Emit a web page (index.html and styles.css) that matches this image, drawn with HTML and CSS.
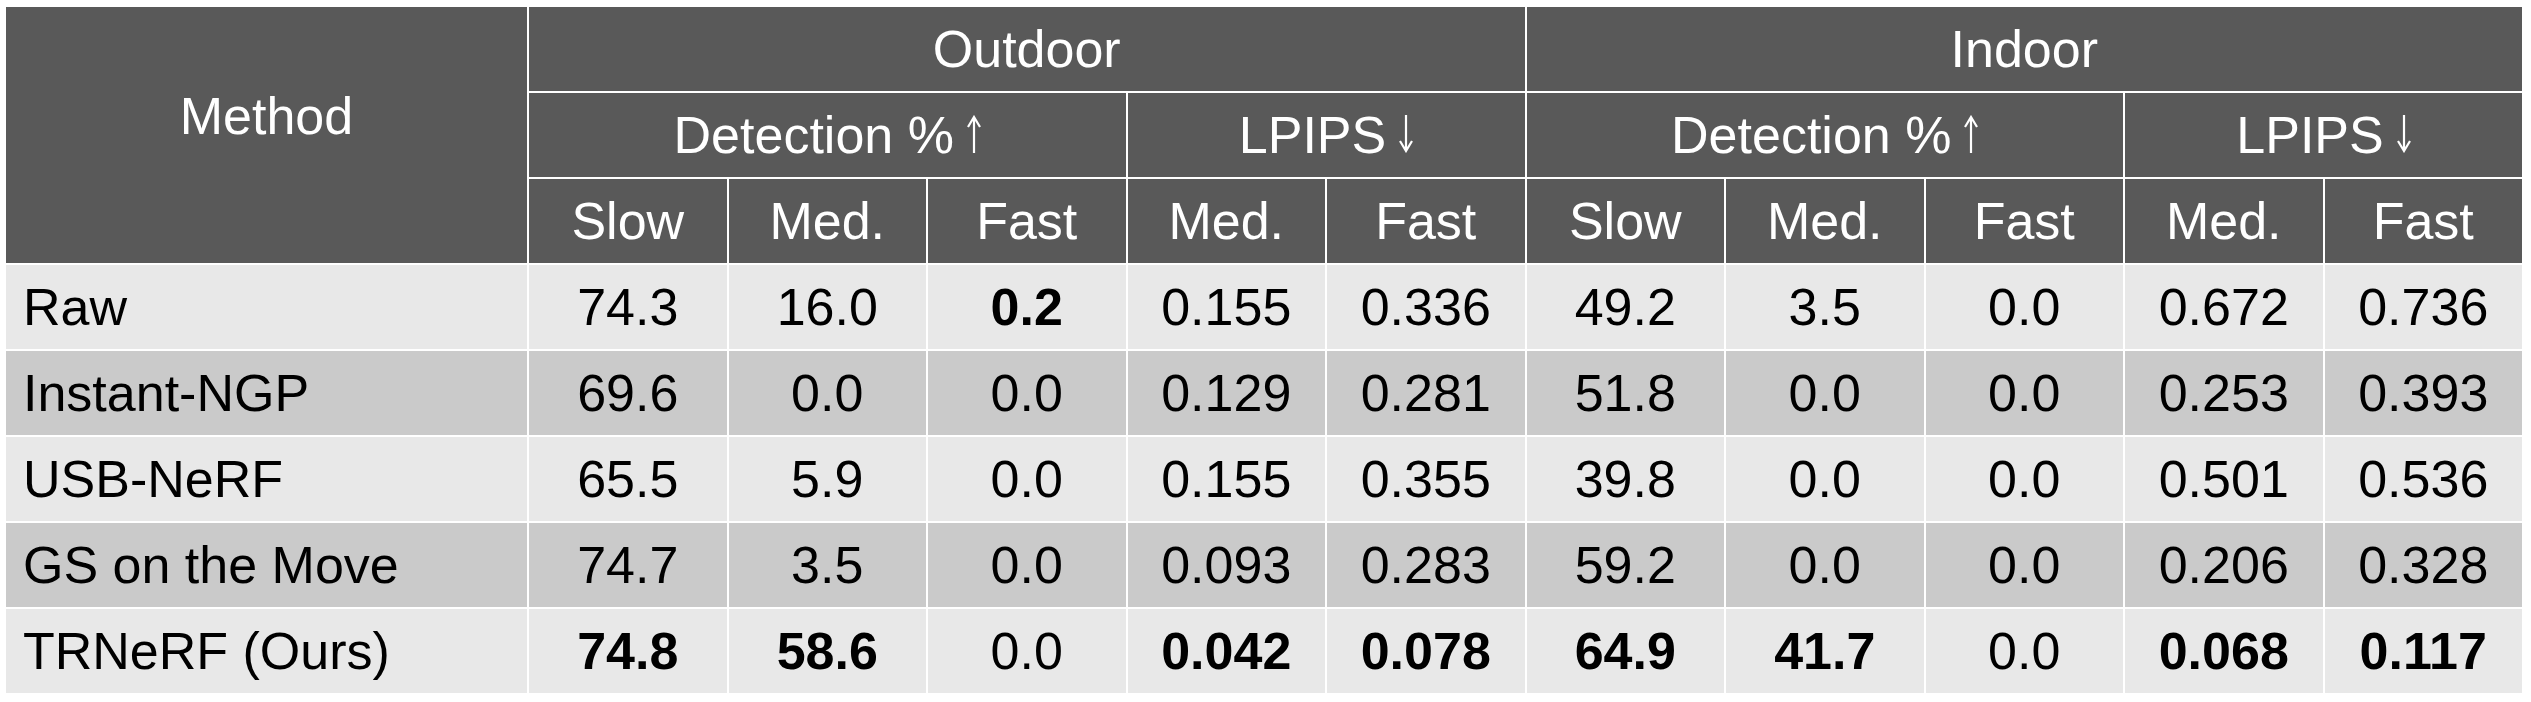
FILE: index.html
```html
<!DOCTYPE html>
<html>
<head>
<meta charset="utf-8">
<link rel="stylesheet" href="styles.css">
</head>
<body>
<div class="wrap">
<table class="results">
  <colgroup>
    <col class="col-method">
    <col span="10">
  </colgroup>
  <thead>
    <tr>
      <th class="method-head" rowspan="3">Method</th>
      <th colspan="5">Outdoor</th>
      <th colspan="5">Indoor</th>
    </tr>
    <tr>
      <th colspan="3">Detection %<svg class="arrow" viewBox="0 0 14 38" aria-label="up"><path d="M7 38V2M1 12L7 2l6 10"/></svg></th>
      <th colspan="2">LPIPS<svg class="arrow" viewBox="0 0 14 38" aria-label="down"><path d="M7 0V36M1 26l6 10 6-10"/></svg></th>
      <th colspan="3">Detection %<svg class="arrow" viewBox="0 0 14 38" aria-label="up"><path d="M7 38V2M1 12L7 2l6 10"/></svg></th>
      <th colspan="2">LPIPS<svg class="arrow" viewBox="0 0 14 38" aria-label="down"><path d="M7 0V36M1 26l6 10 6-10"/></svg></th>
    </tr>
    <tr>
      <th>Slow</th><th>Med.</th><th>Fast</th><th>Med.</th><th>Fast</th>
      <th>Slow</th><th>Med.</th><th>Fast</th><th>Med.</th><th>Fast</th>
    </tr>
  </thead>
  <tbody>
    <tr class="light">
      <td class="name">Raw</td>
      <td>74.3</td><td>16.0</td><td class="best">0.2</td><td>0.155</td><td>0.336</td>
      <td>49.2</td><td>3.5</td><td>0.0</td><td>0.672</td><td>0.736</td>
    </tr>
    <tr class="dark">
      <td class="name">Instant-NGP</td>
      <td>69.6</td><td>0.0</td><td>0.0</td><td>0.129</td><td>0.281</td>
      <td>51.8</td><td>0.0</td><td>0.0</td><td>0.253</td><td>0.393</td>
    </tr>
    <tr class="light">
      <td class="name">USB-NeRF</td>
      <td>65.5</td><td>5.9</td><td>0.0</td><td>0.155</td><td>0.355</td>
      <td>39.8</td><td>0.0</td><td>0.0</td><td>0.501</td><td>0.536</td>
    </tr>
    <tr class="dark">
      <td class="name">GS on the Move</td>
      <td>74.7</td><td>3.5</td><td>0.0</td><td>0.093</td><td>0.283</td>
      <td>59.2</td><td>0.0</td><td>0.0</td><td>0.206</td><td>0.328</td>
    </tr>
    <tr class="light">
      <td class="name">TRNeRF (Ours)</td>
      <td class="best">74.8</td><td class="best">58.6</td><td>0.0</td><td class="best">0.042</td><td class="best">0.078</td>
      <td class="best">64.9</td><td class="best">41.7</td><td>0.0</td><td class="best">0.068</td><td class="best">0.117</td>
    </tr>
  </tbody>
</table>
</div>
</body>
</html>
```

FILE: styles.css
```css
html, body {
  margin: 0;
  padding: 0;
  background: #ffffff;
}

.wrap {
  padding: 5px 0 0 4px;
}

.results {
  table-layout: fixed;
  width: 2520px;
  border-collapse: separate;
  border-spacing: 2px;
  background: #ffffff;
  font-family: "Liberation Sans", Arial, sans-serif;
  font-size: 52px;
  line-height: 60px;
}

.col-method {
  width: 521px;
}

.results tr {
  height: 84px;
}

.results th,
.results td {
  padding: 0;
  text-align: center;
  vertical-align: middle;
  white-space: nowrap;
}

.results th {
  background: #595959;
  color: #ffffff;
  font-weight: normal;
}

.results th.method-head {
  vertical-align: top;
  padding-top: 79px;
}

.arrow {
  width: 14px;
  height: 38px;
  margin-left: 13px;
  vertical-align: baseline;
  fill: none;
  stroke: #ffffff;
  stroke-width: 2.2;
}

.results td {
  color: #000000;
}

.results tr.light td {
  background: #e8e8e8;
}

.results tr.dark td {
  background: #cacaca;
}

.results td.name {
  text-align: left;
  padding-left: 17px;
}

.results td.best {
  font-weight: bold;
}
```
